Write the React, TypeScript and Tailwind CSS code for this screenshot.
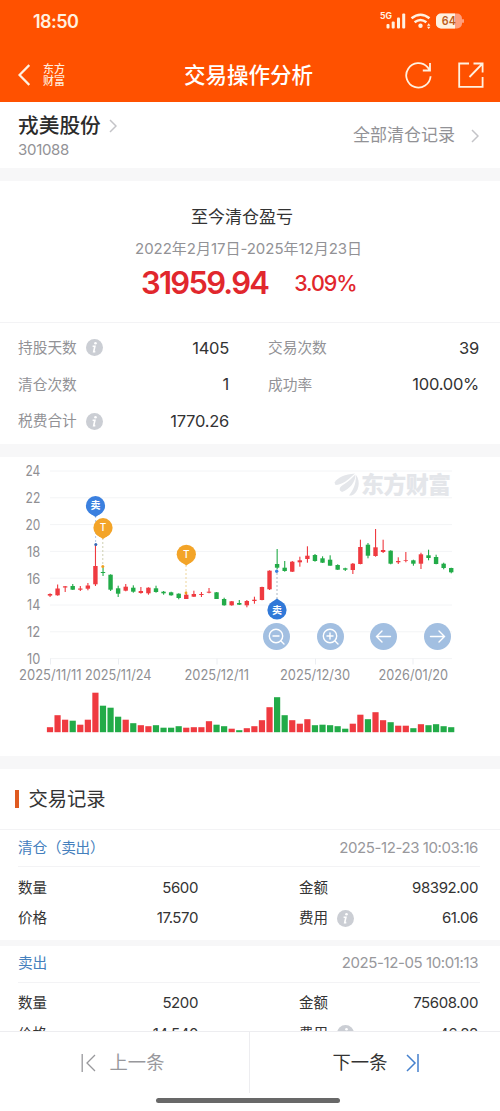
import type { ReactNode } from 'react';

type Candle = [number, number, number, number, number, 'r' | 'g'];

const RED = '#ef3a40';
const GREEN = '#22ab48';
const STEP = 7.57;
const BASE_X = 50;

// high, body top, body bottom, low, volume height, direction
const candles: Candle[] = [
  [593.3, 594, 595.6, 597, 5, 'r'],
  [584.5, 588.5, 595.3, 595.7, 17, 'r'],
  [586, 586.3, 587.5, 592, 12.5, 'r'],
  [584, 586, 589.7, 590, 11.5, 'g'],
  [586, 588.5, 589.7, 591, 7.5, 'r'],
  [583, 585.5, 588.7, 590.3, 12.5, 'r'],
  [544.5, 566, 584.3, 586, 39.5, 'r'],
  [567.5, 572, 573, 576, 26.5, 'g'],
  [574.3, 574.7, 589.7, 591, 24.5, 'g'],
  [585.7, 588.3, 593.7, 597, 15.5, 'g'],
  [584, 586.7, 590.7, 591.3, 12.5, 'r'],
  [585.3, 587.7, 591.7, 592.7, 9, 'g'],
  [587, 591, 593, 593.7, 7, 'r'],
  [587.3, 587.7, 593.3, 594.7, 6, 'r'],
  [585.7, 588.3, 592, 592.7, 7, 'g'],
  [591, 591.7, 593.3, 594.7, 4.5, 'g'],
  [591.7, 592.3, 595.3, 595.7, 4.5, 'g'],
  [593.3, 593.7, 598, 599.3, 6, 'g'],
  [591.7, 594.7, 599, 599, 4.5, 'r'],
  [590.7, 594, 596.7, 597, 5, 'r'],
  [592, 594, 595, 597, 5, 'r'],
  [588, 591.7, 592.7, 593.3, 11, 'r'],
  [592, 592.3, 599, 599, 7.5, 'g'],
  [597.7, 599, 605.3, 605.7, 6, 'g'],
  [601, 601.3, 605.3, 605.7, 3.5, 'r'],
  [600, 603, 604.7, 605, 2, 'g'],
  [600, 601, 605.3, 607.3, 4, 'r'],
  [596.7, 599.7, 601, 603.7, 6, 'r'],
  [586.7, 587, 600, 600.3, 12, 'r'],
  [570.3, 570.7, 589.3, 590, 25, 'r'],
  [549, 564, 567.7, 569.3, 35, 'g'],
  [561, 567.7, 571, 571.7, 17, 'g'],
  [561, 561.7, 571.7, 572, 12, 'r'],
  [556.7, 560.3, 562.3, 566.7, 8.5, 'r'],
  [546.3, 555.7, 559, 562.7, 13, 'r'],
  [554, 555, 561, 561.7, 7, 'g'],
  [556.3, 558.3, 562.7, 563, 7.5, 'g'],
  [555.3, 559.7, 565.7, 565.7, 7, 'g'],
  [564.3, 565, 569.7, 570, 6, 'g'],
  [567.7, 568.3, 569.7, 571, 3.5, 'g'],
  [563, 563.7, 570, 574, 8.5, 'r'],
  [539.7, 547, 564, 564.3, 17.5, 'r'],
  [543, 544.7, 555.7, 558.3, 13, 'g'],
  [529, 547.3, 556, 556.7, 20, 'r'],
  [539.7, 550, 552, 553, 12, 'r'],
  [550.3, 550.7, 563.7, 564.3, 10, 'g'],
  [557.3, 561, 562.3, 564, 6.5, 'r'],
  [552, 560.3, 561, 562.3, 6.5, 'r'],
  [559.7, 560.3, 563.7, 565.7, 4, 'g'],
  [552.7, 554.3, 563.7, 569, 8, 'r'],
  [549.7, 555.3, 558, 560.3, 7, 'g'],
  [554.7, 557, 564, 564.3, 8, 'g'],
  [562.7, 563.7, 568, 569.3, 6, 'g'],
  [567.7, 568, 572.3, 573.3, 5, 'g'],
];

const prices = [24, 22, 20, 18, 16, 14, 12, 10];

const dates = [
  { text: '2025/11/11', x: 19, w: 62.5, tick: 50.5 },
  { text: '2025/11/24', x: 85, w: 66.5, tick: 118.5 },
  { text: '2025/12/11', x: 184.5, w: 64.5, tick: 217 },
  { text: '2025/12/30', x: 280, w: 70, tick: 315.5 },
  { text: '2026/01/20', x: 378.5, w: 69.5, tick: 413 },
];

function InfoIcon() {
  return (
    <svg className="w-[17px] h-[17px] shrink-0" viewBox="0 0 17 17">
      <circle cx="8.5" cy="8.5" r="8.5" fill="#cbced4" />
      <circle cx="9.5" cy="4.3" r="1.3" fill="#fff" />
      <path d="M6.6 7.2h2.3L7.7 12.6h1.6" fill="none" stroke="#fff" strokeWidth="1.6" />
    </svg>
  );
}

function Chevron() {
  return (
    <svg className="w-2 h-[14px]" viewBox="0 0 8 14" fill="none" stroke="#c4c4c8" strokeWidth="1.5">
      <path d="M1 1l6 6-6 6" />
    </svg>
  );
}

function Marker({ x, y, label, color, up }: { x: number; y: number; label: string; color: string; up?: boolean }) {
  return (
    <g transform={`translate(${x} ${y})`}>
      <circle r="9.6" fill={color} />
      <path d={up ? 'M-6 -7.2L0 -11.5L6 -7.2z' : 'M-6 7.2L0 11.2L6 7.2z'} fill={color} />
      <text y="3.6" textAnchor="middle" fontSize="10" fontWeight={label === 'T' ? 500 : 700} fill="#fff">{label}</text>
    </g>
  );
}

function RoundButton({ className, children }: { className: string; children: ReactNode }) {
  return (
    <button className={`absolute top-[166px] w-[27px] h-[27px] rounded-full bg-[#a2bfe1] ${className}`}>
      <svg className="w-[27px] h-[27px]" viewBox="0 0 27 27" fill="none" stroke="#fff" strokeWidth="1.4" strokeLinecap="round">
        {children}
      </svg>
    </button>
  );
}

function Chart() {
  return (
    <section className="relative h-[299px] shrink-0 bg-white">
      <svg className="block w-[500px] h-[299px]" viewBox="0 457 500 299">
        {prices.map((p, i) => (
          <g key={p}>
            <path d={`M50 ${471 + i * 26.8}H452`} stroke="#f3f4f6" />
            <text x={p < 20 ? 27 : 25.5} y={476.3 + i * 26.8} fontSize="14" fill="#8f8f93" textLength={p < 20 ? 13.3 : 14.8} lengthAdjust="spacingAndGlyphs">{p}</text>
          </g>
        ))}
        <g fill="#e4e6ea">
          <path d="M334.5 482.5C338 477 345 474.5 355 473.5C348 480 342 485 335.5 485z" />
          <path d="M340 490.5C339 488 341 486 344.5 484C349 481 352 478 355.5 474.5C355.5 482 350 489 342 492z" />
          <path d="M349 495.5C353 490 356 485 356 475C361 481 359 493 351.500 495.500z" />
          <text x="361" y="493" fontSize="23" fontWeight="900" textLength="90">东方财富</text>
        </g>
        {dates.map((d) => (
          <g key={d.text}>
            <path d={`M${d.tick} 658.5v6`} stroke="#eceef2" />
            <text x={d.x} y="680" fontSize="13.8" fill="#8f8f93" textLength={d.w} lengthAdjust="spacingAndGlyphs">{d.text}</text>
          </g>
        ))}
        {candles.map(([high, top, bottom, low, volume, dir], i) => {
          const x = BASE_X + i * STEP;
          const color = dir === 'r' ? RED : GREEN;
          return (
            <g key={i} fill={color}>
              <rect x={x - 0.5} y={high} width="1.1" height={low - high} />
              <rect x={x - 2.2} y={top} width="4.4" height={bottom - top} />
              <rect x={x - 3.1} y={732.2 - volume} width="6.2" height={volume} />
            </g>
          );
        })}
        <g fill="none" strokeWidth="0.9" strokeDasharray="2 2">
          <path d="M95.6 516V543" stroke="#a9bfe2" />
          <path d="M102.8 538V566" stroke="#c8c9a8" />
          <path d="M186 565V592" stroke="#ecd08f" />
          <path d="M277 573V600" stroke="#a5afba" />
        </g>
        <circle cx="95.8" cy="544.5" r="1.5" fill="#3568b5" />
        <circle cx="102.8" cy="566.5" r="1.5" fill="#f0a020" />
        <circle cx="186" cy="593" r="1.4" fill="#f0a020" />
        <circle cx="276.7" cy="571.3" r="1.7" fill="#3b82e0" />
        <Marker x={95.5} y={505.7} label="卖" color="#3b80df" />
        <Marker x={103} y={527.7} label="T" color="#f3a428" />
        <Marker x={186.3} y={554.3} label="T" color="#f3a428" />
        <Marker x={277} y={610} label="卖" color="#3179d8" up />
      </svg>
      <RoundButton className="left-[263px]">
        <circle cx="13" cy="13" r="6.7" />
        <path d="M10 13h6M18 18l3 3" />
      </RoundButton>
      <RoundButton className="left-[316.5px]">
        <circle cx="13" cy="13" r="6.7" />
        <path d="M10 13h6M13 10v6M18 18l3 3" />
      </RoundButton>
      <RoundButton className="left-[370px]">
        <path d="M20.500 13.500H6.500M12 8l-5.500 5.500L12 19" />
      </RoundButton>
      <RoundButton className="left-[423.5px]">
        <path d="M6.500 13.500h14M15 8l5.500 5.500L15 19" />
      </RoundButton>
    </section>
  );
}

function Stat({ label, value, info }: { label: string; value: string; info?: boolean }) {
  return (
    <div className="flex items-center h-[36.7px]">
      <span className="text-[14.7px] text-[#929296]">{label}</span>
      {info && <span className="ml-[9px]"><InfoIcon /></span>}
      <span className="ml-auto text-[16.5px] tracking-[-0.25px] text-[#333]">{value}</span>
    </div>
  );
}

interface TradeRecord {
  type: string;
  time: string;
  count: string;
  amount: string;
  price: string;
  fee: string;
}

const records: TradeRecord[] = [
  { type: '清仓（卖出）', time: '2025-12-23 10:03:16', count: '5600', amount: '98392.00', price: '17.570', fee: '61.06' },
  { type: '卖出', time: '2025-12-05 10:01:13', count: '5200', amount: '75608.00', price: '14.540', fee: '46.88' },
];

function RecordItem({ record }: { record: TradeRecord }) {
  const cell = 'flex items-center h-[30.5px]';
  const value = 'ml-auto tracking-[-0.4px]';
  return (
    <div className="h-[115.5px] shrink-0 border-b-[6px] border-[#f7f7f8] bg-white">
      <div className="ml-[18px] mr-5 flex h-[37px] items-center justify-between border-b border-[#f3f3f5]">
        <span className="text-[14.7px] tracking-[-0.3px] text-[#4580bd]">{record.type}</span>
        <span className="text-[15px] tracking-[-0.4px] text-[#98989c] mr-[2px]">{record.time}</span>
      </div>
      <div className="grid grid-cols-[180px_179px] gap-x-[101px] pl-[18px] pt-[5.5px] text-[15px] text-[#333]">
        <div className={cell}><span className="text-[14.5px]">数量</span><span className={value}>{record.count}</span></div>
        <div className={cell}><span className="text-[14.5px]">金额</span><span className={value}>{record.amount}</span></div>
        <div className={cell}><span className="text-[14.5px]">价格</span><span className={value}>{record.price}</span></div>
        <div className={cell}>
          <span className="text-[14.5px] mr-[9px]">费用</span>
          <InfoIcon />
          <span className={value}>{record.fee}</span>
        </div>
      </div>
    </div>
  );
}

export default function App() {
  return (
    <div className="flex h-[1111px] w-[500px] flex-col overflow-hidden whitespace-nowrap bg-white font-['Inter','Noto_Sans_CJK_SC',sans-serif] text-[#333]">
      <header className="h-[102px] shrink-0 bg-[#ff5100] text-white">
        <div className="flex h-[42px] items-center pl-[33px] pr-9">
          <span className="text-[18px] font-semibold tracking-[-0.55px] text-[#fff1e0]">18:50</span>
          <svg className="ml-auto h-5 w-[86px]" viewBox="378 11 86 20">
            <text x="380" y="19" fontSize="8.5" fontWeight="700" fill="#fff1e0" textLength="12" lengthAdjust="spacingAndGlyphs">5G</text>
            <g fill="#fff1e0">
              <rect x="386.5" y="24" width="3" height="4.5" rx="1" />
              <rect x="391.7" y="21.5" width="3" height="7" rx="1" />
              <rect x="397" y="17.5" width="3" height="11" rx="1" />
              <rect x="402.2" y="13.5" width="3" height="15" rx="1" />
              <circle cx="420.5" cy="25.7" r="2.2" />
              <path d="M427 25.8l1.7-2.6 1.7 2.6zM427 26.8h3.4l-1.7 2.2z" />
            </g>
            <g fill="none" stroke="#fff1e0" strokeWidth="2.5">
              <path d="M411.5 18.3q9-7 18 0" />
              <path d="M414.6 22.3q5.9-4.6 11.8 0" />
            </g>
            <rect x="436" y="13.5" width="26" height="15" rx="5" fill="#ff9e7b" />
            <path d="M441 13.500h14v15h-14a5 5 0 0 1-5-5v-5a5 5 0 0 1 5-5z" fill="#fff1e0" />
            <rect x="462" y="19" width="2" height="4" rx="1" fill="#ff9e7b" />
            <text x="441.8" y="25.3" fontSize="12" fontWeight="600" fill="#bd5d20" textLength="14" lengthAdjust="spacingAndGlyphs">64</text>
          </svg>
        </div>
        <div className="flex h-[66px] items-center pl-[18px] pr-4">
          <svg className="w-3 h-[22px]" viewBox="0 0 12 22" fill="none" stroke="#fff1e0" strokeWidth="2.3">
            <path d="M11.3 1L1.5 11l9.8 10" />
          </svg>
          <div className="ml-[13px] w-[22px] text-[11px] font-medium leading-[12px] text-[#ffeadb]">
            东方<br />财富
          </div>
          <h1 className="ml-[119px] text-[21.5px] font-medium">交易操作分析</h1>
          <svg className="ml-auto mr-[26px] w-[27px] h-[27px]" viewBox="0 0 27 27" fill="none" stroke="#fff1e0" strokeWidth="1.8">
            <path d="M25.6 14.3A12.2 12.2 0 1 1 22.5 5.2l2 2.6M25 1v7.500h-7.200" />
          </svg>
          <svg className="w-[26px] h-[26px]" viewBox="0 0 26 26" fill="none" stroke="#fff1e0" strokeWidth="1.8">
            <path d="M11 1.500H1.200v23.300h23.400V15M15.500 1.500h9.100v9M24.600 1.500L11.500 15" />
          </svg>
        </div>
      </header>

      <main className="flex min-h-0 flex-1 flex-col overflow-hidden">
        <section className="flex h-[79px] shrink-0 border-b-[13px] border-[#f7f7f8] pl-[18px] pr-[21px]">
          <div className="pt-[10px]">
            <div className="flex items-center gap-2 h-[28px]">
              <h2 className="text-[20.7px] font-medium text-[#2b2b2b]">戎美股份</h2>
              <Chevron />
            </div>
            <p className="text-[15px] leading-[20px] tracking-[-0.3px] text-[#929296]">301088</p>
          </div>
          <div className="ml-auto flex items-center gap-4 pt-[2px]">
            <span className="text-[17px] text-[#929296]">全部清仓记录</span>
            <Chevron />
          </div>
        </section>

        <section className="h-[142px] shrink-0 border-b border-[#f3f3f5] pt-[22px] text-center">
          <h3 className="text-[17px] leading-[28px] pr-4">至今清仓盈亏</h3>
          <p className="mt-1 text-[15px] leading-[28px] tracking-[-0.03px] text-[#929296] pr-[3px]">2022年2月17日-2025年12月23日</p>
          <div className="flex items-center h-[40px] pl-[141px] text-[#e1272d]">
            <span className="text-[31px] font-semibold tracking-[-1.75px]">31959.94</span>
            <span className="ml-[26px] text-[21.5px] font-medium tracking-[-1.1px]">3.09%</span>
          </div>
        </section>

        <section className="grid h-[134px] shrink-0 grid-cols-[211px_211px] content-start gap-x-[39px] border-b-[13px] border-[#f7f7f8] pl-[18px] pt-[6.6px]">
          <Stat label="持股天数" value="1405" info />
          <Stat label="交易次数" value="39" />
          <Stat label="清仓次数" value="1" />
          <Stat label="成功率" value="100.00%" />
          <Stat label="税费合计" value="1770.26" info />
        </section>

        <Chart />

        <section className="shrink-0 border-t-[13px] border-[#f7f7f8]">
          <div className="flex h-[61px] items-center border-b border-[#f3f3f5] pl-[15px]">
            <span className="h-[18px] w-[3.5px] bg-[#df5a20]" />
            <h3 className="ml-[10px] text-[19.3px]">交易记录</h3>
          </div>
          {records.map((r) => (
            <RecordItem key={r.time} record={r} />
          ))}
        </section>
      </main>

      <footer className="h-20 shrink-0 border-t border-[#ededf0] bg-white">
        <div className="grid h-[61px] grid-cols-2">
          <button className="flex items-center justify-center gap-[14px] border-r border-[#ededf0] pr-1 text-[18.3px] text-[#98989c]">
            <svg className="w-[15px] h-[18px]" viewBox="0 0 15 18" fill="none" stroke="#98989c" strokeWidth="1.3">
              <path d="M1.2 0v18M14 1L6 9l8 8" />
            </svg>
            上一条
          </button>
          <button className="flex items-center justify-center gap-[19px] pl-[2px] text-[18.3px]">
            下一条
            <svg className="w-[13px] h-[18px]" viewBox="0 0 13 18" fill="none" stroke="#4580cd" strokeWidth="1.5">
              <path d="M1 1l8 8-8 8M12 0v18" />
            </svg>
          </button>
        </div>
        <div className="mx-auto mt-[5px] h-[5px] w-[184px] -translate-x-[2px] rounded-full bg-[#686868]" />
      </footer>
    </div>
  );
}
